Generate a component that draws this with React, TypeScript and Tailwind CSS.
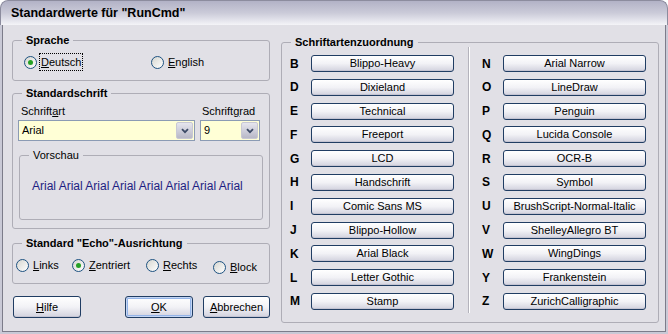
import type { ReactNode } from "react";

const LEFT_MAP: [string, string][] = [
  ["B", "Blippo-Heavy"],
  ["D", "Dixieland"],
  ["E", "Technical"],
  ["F", "Freeport"],
  ["G", "LCD"],
  ["H", "Handschrift"],
  ["I", "Comic Sans MS"],
  ["J", "Blippo-Hollow"],
  ["K", "Arial Black"],
  ["L", "Letter Gothic"],
  ["M", "Stamp"],
];

const RIGHT_MAP: [string, string][] = [
  ["N", "Arial Narrow"],
  ["O", "LineDraw"],
  ["P", "Penguin"],
  ["Q", "Lucida Console"],
  ["R", "OCR-B"],
  ["S", "Symbol"],
  ["U", "BrushScript-Normal-Italic"],
  ["V", "ShelleyAllegro BT"],
  ["W", "WingDings"],
  ["Y", "Frankenstein"],
  ["Z", "ZurichCalligraphic"],
];

/** Label with an underlined accelerator character. */
function Acc({ text, at = 0 }: { text: string; at?: number }) {
  return (
    <>
      {text.slice(0, at)}
      <u className="underline-offset-[1px]">{text[at]}</u>
      {text.slice(at + 1)}
    </>
  );
}

function Group({
  title,
  bold = true,
  className = "",
  children,
}: {
  title: string;
  bold?: boolean;
  className?: string;
  children: ReactNode;
}) {
  return (
    <fieldset className={`rounded-[3px] border border-[#aeadb6] ${className}`}>
      <legend
        className={`ml-[9px] px-[4px] text-[11px] leading-[14px] text-black ${bold ? "font-bold" : ""}`}
      >
        {title}
      </legend>
      {children}
    </fieldset>
  );
}

function Radio({ label, at = 0, checked = false, focus = false }: { label: string; at?: number; checked?: boolean; focus?: boolean }) {
  return (
    <span className="flex items-center text-[11px] leading-[14px]">
      <span className="flex h-[13px] w-[13px] items-center justify-center rounded-full border border-[#1d5281] bg-gradient-to-br from-[#d6d6d0] to-white">
        {checked && <span className="h-[5px] w-[5px] rounded-full bg-[#25a125]" />}
      </span>
      <span className={`ml-[3px] px-[1px] ${focus ? "py-[1px] outline outline-1 outline-dotted outline-black" : ""}`}>
        <Acc text={label} at={at} />
      </span>
    </span>
  );
}

function XpButton({ children, className = "", focused = false }: { children: ReactNode; className?: string; focused?: boolean }) {
  return (
    <button
      className={`flex items-center justify-center rounded-[3px] border border-[#203d63] bg-gradient-to-b from-white via-[#f2f2f6] to-[#d2d2de] text-[11px] leading-none text-black ${
        focused ? "shadow-[inset_0_0_0_1px_#c4d6f4,inset_0_0_0_2px_#94b4e8]" : "shadow-[inset_0_-1px_0_#c4c4d2]"
      } ${className}`}
    >
      {children}
    </button>
  );
}

function Combo({ value, className = "" }: { value: string; className?: string }) {
  return (
    <div className={`flex h-[21px] items-center border border-[#8b9bb4] bg-[#ffffd6] ${className}`}>
      <span className="flex-1 pl-[3px] text-[11px]">{value}</span>
      <span className="mr-[1px] flex h-[17px] w-[17px] items-center justify-center rounded-[2px] border border-[#c8c8d4] bg-gradient-to-b from-[#e6e6ee] to-[#b8b8c8]">
        <svg width="8" height="6" viewBox="0 0 8 6">
          <path d="M1 1.2 L4 4.2 L7 1.2" fill="none" stroke="#3c4a66" strokeWidth="1.8" />
        </svg>
      </span>
    </div>
  );
}

function MapColumn({ rows }: { rows: [string, string][] }) {
  return (
    <div className="flex h-[255px] flex-col justify-between">
      {rows.map(([k, name]) => (
        <div key={k} className="flex h-[17px] items-center">
          <span className="w-[21px] text-[12px] font-bold leading-none">{k}</span>
          <XpButton className="h-[17px] w-[143px]">{name}</XpButton>
        </div>
      ))}
    </div>
  );
}

export default function App() {
  return (
    <div className="flex h-[334px] w-[668px] flex-col overflow-hidden rounded-t-[8px] bg-[#c9c9d6] font-['Liberation_Sans',Arial,sans-serif] text-black">
      <div className="flex h-[25px] shrink-0 items-center rounded-t-[8px] border border-b-0 border-[#8c8c9e] bg-gradient-to-b from-[#b2b2c6] via-[#cbcbd9] to-[#f4f4f8] pl-[10px]">
        <span className="text-[12.5px] font-bold">Standardwerte für "RunCmd"</span>
      </div>

      <div className="mx-[2px] mb-[2px] flex flex-1 border-x border-b border-[#7c7c8a] bg-[#e1e0e6] pl-[9px] pt-[8px]">
        {/* left column */}
        <div className="flex w-[258px] flex-col">
          <Group title="Sprache" className="h-[48px]">
            <div className="flex pl-[11px] pt-[7px]">
              <span className="w-[127px]">
                <Radio label="Deutsch" checked focus />
              </span>
              <Radio label="English" />
            </div>
          </Group>

          <Group title="Standardschrift" className="mt-[5px] h-[143px]">
            <div className="flex pt-[4px] text-[11px] leading-[14px]">
              <span className="w-[189px] pl-[8px]">
                <Acc text="Schriftart" at={7} />
              </span>
              <span>
                <Acc text="Schriftgrad" at={7} />
              </span>
            </div>
            <div className="mt-[2px] flex pl-[5px]">
              <Combo value="Arial" className="w-[177px]" />
              <Combo value="9" className="ml-[5px] w-[60px]" />
            </div>
            <Group title="Vorschau" bold={false} className="mx-[6px] mt-[7px] h-[72px]">
              <div className="pl-[12px] pt-[17px] text-[12px] leading-[14px] text-[#1e1e82]">
                Arial Arial Arial Arial Arial Arial Arial Arial
              </div>
            </Group>
          </Group>

          <Group title={'Standard "Echo"-Ausrichtung'} className="mt-[7px] h-[48px]">
            <div className="flex pl-[3px] pt-[8px]">
              <span className="w-[56px]">
                <Radio label="Links" />
              </span>
              <span className="w-[74px]">
                <Radio label="Zentriert" checked />
              </span>
              <span className="w-[67px]">
                <Radio label="Rechts" />
              </span>
              <span className="mt-[2px]">
                <Radio label="Block" />
              </span>
            </div>
          </Group>

          <div className="mt-[12px] flex pl-[1px]">
            <XpButton className="h-[22px] w-[68px]">
              <Acc text="Hilfe" />
            </XpButton>
            <XpButton focused className="ml-[44px] h-[22px] w-[68px]">
              <Acc text="OK" />
            </XpButton>
            <XpButton className="ml-[10px] h-[22px] w-[67px]">
              <Acc text="Abbrechen" />
            </XpButton>
          </div>
        </div>

        {/* right column */}
        <Group title="Schriftartenzuordnung" className="ml-[11px] mt-[2px] h-[288px] w-[378px]">
          <div className="flex pl-[8px] pt-[6px]">
            <MapColumn rows={LEFT_MAP} />
            <div className="ml-[14px] mr-[12px] -mt-[8px] h-[266px] w-[2px] border-l border-r border-l-[#b4b3bc] border-r-white" />
            <MapColumn rows={RIGHT_MAP} />
          </div>
        </Group>
      </div>
    </div>
  );
}
